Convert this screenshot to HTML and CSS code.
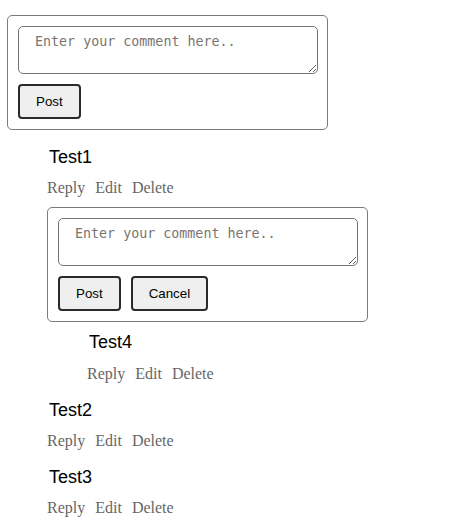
FILE: index.html
```html
<!DOCTYPE html>
<html>
<head>
<meta charset="utf-8">
<link rel="stylesheet" href="styles.css">
</head>
<body>
<div class="app">
  <div class="box main-box">
    <textarea class="input" placeholder="Enter your comment here.."></textarea>
    <div class="btns">
      <button class="btn">Post</button>
    </div>
  </div>
  <div class="list">
    <div class="comment">
      <div class="name">Test1</div>
      <div class="actions"><span>Reply</span><span>Edit</span><span>Delete</span></div>
      <div class="box reply-box">
        <textarea class="input" placeholder="Enter your comment here.."></textarea>
        <div class="btns">
          <button class="btn">Post</button>
          <button class="btn">Cancel</button>
        </div>
      </div>
      <div class="comment">
        <div class="name nested-name">Test4</div>
        <div class="actions"><span>Reply</span><span>Edit</span><span>Delete</span></div>
      </div>
    </div>
    <div class="comment">
      <div class="name">Test2</div>
      <div class="actions"><span>Reply</span><span>Edit</span><span>Delete</span></div>
    </div>
    <div class="comment">
      <div class="name">Test3</div>
      <div class="actions"><span>Reply</span><span>Edit</span><span>Delete</span></div>
    </div>
  </div>
</div>
</body>
</html>
```

FILE: styles.css
```css
html, body {
  margin: 0;
  padding: 0;
  background: #fff;
}
.app {
  padding: 15px 0 0 7px;
}
.box {
  width: 321px;
  box-sizing: border-box;
  border: 1px solid #7a7a7a;
  border-radius: 5px;
  padding: 10px;
  display: flex;
  flex-direction: column;
  gap: 10px;
}
.input {
  width: 300px;
  height: 48px;
  box-sizing: border-box;
  margin: 0;
  border: 1px solid #767676;
  border-radius: 5px;
  padding: 7px 16px;
  font-family: "DejaVu Sans Mono", monospace;
  font-size: 13.333px;
  display: block;
}
.input::placeholder {
  color: #7a7570;
}
.btns {
  display: flex;
  gap: 10px;
}
.btn {
  font-family: "Liberation Sans", Arial, sans-serif;
  font-size: 13.333px;
  background: #efefef;
  color: #000;
  border: 2px solid #2a2a2a;
  border-radius: 4px;
  padding: 8px 16px;
  margin: 0;
  line-height: 15px;
}
.list {
  margin-top: 5px;
}
.comment {
  padding-left: 40px;
}
.name {
  padding-top: 12px;
  padding-left: 2px;
  font-family: "Liberation Sans", Arial, sans-serif;
  font-size: 18px;
  line-height: 21px;
  color: #000;
}
.nested-name {
  padding-top: 10px;
}
.actions {
  margin-top: 11px;
  padding-bottom: 5px;
  display: flex;
  gap: 10px;
  font-family: "Liberation Serif", "Times New Roman", serif;
  font-size: 16px;
  line-height: 18px;
  color: #666;
}
.nested-name + .actions {
  margin-top: 12px;
}
.reply-box {
  margin-top: 5px;
}
```
